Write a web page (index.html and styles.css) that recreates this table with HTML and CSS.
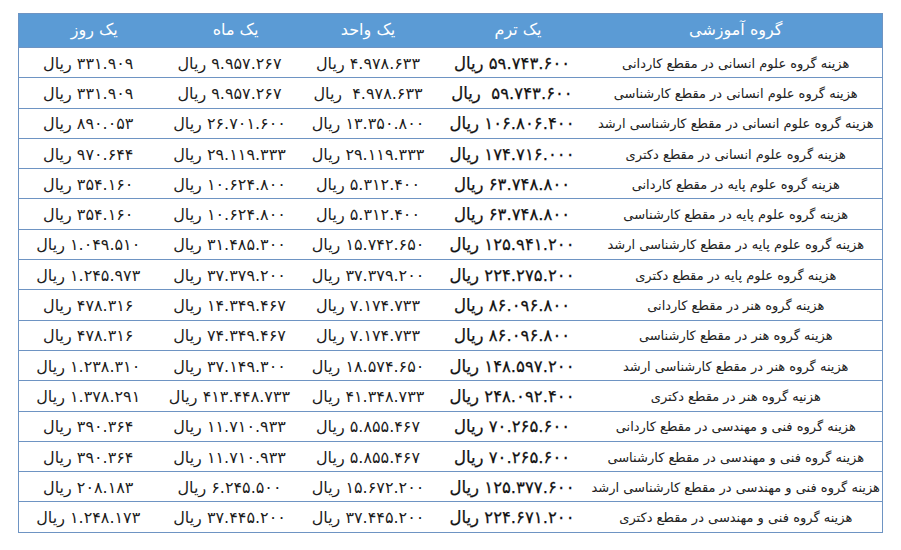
FILE: index.html
```html
<!DOCTYPE html>
<html lang="fa" dir="rtl">
<head>
<meta charset="utf-8">
<link rel="stylesheet" href="styles.css">
</head>
<body>
<div class="page">
<table class="fees">
<colgroup>
<col class="c-group"><col class="c-term"><col class="c-unit"><col class="c-month"><col class="c-day">
</colgroup>
<thead>
<tr><th class="h-group">گروه آموزشی</th><th class="h-term">یک ترم</th><th class="h-unit">یک واحد</th><th class="h-month">یک ماه</th><th class="h-day">یک روز</th></tr>
</thead>
<tbody>
<tr><td class="group">هزینه گروه علوم انسانی در مقطع کاردانی</td><td class="term">۵۹.۷۴۳.۶۰۰ ریال</td><td>۴.۹۷۸.۶۳۳ ریال</td><td>۹.۹۵۷.۲۶۷ ریال</td><td>۳۳۱.۹۰۹ ریال</td></tr>
<tr><td class="group">هزینه گروه علوم انسانی در مقطع کارشناسی</td><td class="term">۵۹.۷۴۳.۶۰۰&nbsp; ریال</td><td>۴.۹۷۸.۶۳۳&nbsp; ریال</td><td>۹.۹۵۷.۲۶۷ ریال</td><td>۳۳۱.۹۰۹ ریال</td></tr>
<tr><td class="group">هزینه گروه علوم انسانی در مقطع کارشناسی ارشد</td><td class="term">۱۰۶.۸۰۶.۴۰۰ ریال</td><td>۱۳.۳۵۰.۸۰۰ ریال</td><td>۲۶.۷۰۱.۶۰۰ ریال</td><td>۸۹۰.۰۵۳ ریال</td></tr>
<tr><td class="group">هزینه گروه علوم انسانی در مقطع دکتری</td><td class="term">۱۷۴.۷۱۶.۰۰۰ ریال</td><td>۲۹.۱۱۹.۳۳۳ ریال</td><td>۲۹.۱۱۹.۳۳۳ ریال</td><td>۹۷۰.۶۴۴ ریال</td></tr>
<tr><td class="group">هزینه گروه علوم پایه در مقطع کاردانی</td><td class="term">۶۳.۷۴۸.۸۰۰ ریال</td><td>۵.۳۱۲.۴۰۰ ریال</td><td>۱۰.۶۲۴.۸۰۰ ریال</td><td>۳۵۴.۱۶۰ ریال</td></tr>
<tr><td class="group">هزینه گروه علوم پایه در مقطع کارشناسی</td><td class="term">۶۳.۷۴۸.۸۰۰ ریال</td><td>۵.۳۱۲.۴۰۰ ریال</td><td>۱۰.۶۲۴.۸۰۰ ریال</td><td>۳۵۴.۱۶۰ ریال</td></tr>
<tr><td class="group">هزینه گروه علوم پایه در مقطع کارشناسی ارشد</td><td class="term">۱۲۵.۹۴۱.۲۰۰ ریال</td><td>۱۵.۷۴۲.۶۵۰ ریال</td><td>۳۱.۴۸۵.۳۰۰ ریال</td><td>۱.۰۴۹.۵۱۰ ریال</td></tr>
<tr><td class="group">هزینه گروه علوم پایه در مقطع دکتری</td><td class="term">۲۲۴.۲۷۵.۲۰۰ ریال</td><td>۳۷.۳۷۹.۲۰۰ ریال</td><td>۳۷.۳۷۹.۲۰۰ ریال</td><td>۱.۲۴۵.۹۷۳ ریال</td></tr>
<tr><td class="group">هزینه گروه هنر در مقطع کاردانی</td><td class="term">۸۶.۰۹۶.۸۰۰ ریال</td><td>۷.۱۷۴.۷۳۳ ریال</td><td>۱۴.۳۴۹.۴۶۷ ریال</td><td>۴۷۸.۳۱۶ ریال</td></tr>
<tr><td class="group">هزینه گروه هنر در مقطع کارشناسی</td><td class="term">۸۶.۰۹۶.۸۰۰ ریال</td><td>۷.۱۷۴.۷۳۳ ریال</td><td>۷۴.۳۴۹.۴۶۷ ریال</td><td>۴۷۸.۳۱۶ ریال</td></tr>
<tr><td class="group">هزینه گروه هنر در مقطع کارشناسی ارشد</td><td class="term">۱۴۸.۵۹۷.۲۰۰ ریال</td><td>۱۸.۵۷۴.۶۵۰ ریال</td><td>۳۷.۱۴۹.۳۰۰ ریال</td><td>۱.۲۳۸.۳۱۰ ریال</td></tr>
<tr><td class="group">هزنیه گروه هنر در مقطع دکتری</td><td class="term">۲۴۸.۰۹۲.۴۰۰ ریال</td><td>۴۱.۳۴۸.۷۳۳ ریال</td><td>۴۱۳.۴۴۸.۷۳۳ ریال</td><td>۱.۳۷۸.۲۹۱ ریال</td></tr>
<tr><td class="group">هزینه گروه فنی و مهندسی در مقطع کاردانی</td><td class="term">۷۰.۲۶۵.۶۰۰ ریال</td><td>۵.۸۵۵.۴۶۷ ریال</td><td>۱۱.۷۱۰.۹۳۳ ریال</td><td>۳۹۰.۳۶۴ ریال</td></tr>
<tr><td class="group">هزینه گروه فنی و مهندسی در مقطع کارشناسی</td><td class="term">۷۰.۲۶۵.۶۰۰ ریال</td><td>۵.۸۵۵.۴۶۷ ریال</td><td>۱۱.۷۱۰.۹۳۳ ریال</td><td>۳۹۰.۳۶۴ ریال</td></tr>
<tr><td class="group">هزینه گروه فنی و مهندسی در مقطع کارشناسی ارشد</td><td class="term">۱۲۵.۳۷۷.۶۰۰ ریال</td><td>۱۵.۶۷۲.۲۰۰ ریال</td><td>۶.۲۴۵.۵۰۰ ریال</td><td>۲۰۸.۱۸۳ ریال</td></tr>
<tr><td class="group">هزینه گروه فنی و مهندسی در مقطع دکتری</td><td class="term">۲۲۴.۶۷۱.۲۰۰ ریال</td><td>۳۷.۴۴۵.۲۰۰ ریال</td><td>۳۷.۴۴۵.۲۰۰ ریال</td><td>۱.۲۴۸.۱۷۳ ریال</td></tr>
</tbody>
</table>
</div>
</body>
</html>
```
FILE: styles.css
```css
html, body {
  margin: 0;
  padding: 0;
  background: #ffffff;
}
.page {
  padding: 13px 18px 0 20px;
  font-family: "DejaVu Sans", "Noto Sans", sans-serif;
  color: #1c1c1c;
}
.fees {
  width: 864px;
  border-collapse: collapse;
  table-layout: fixed;
  border: 1px solid #6e94c3;
}
.c-group { width: 293px; }
.c-term { width: 155px; }
.c-unit { width: 133px; }
.c-month { width: 144px; }
.c-day { width: 139px; }
.fees th {
  background: #5b9bd5;
  color: #ffffff;
  font-weight: normal;
  font-size: 16px;
  line-height: 18px;
  height: 31px;
  padding: 0 0 2px 0;
  text-align: center;
  border: none;
}
.fees th.h-term,
.fees th.h-month,
.fees th.h-day { padding-left: 12px; }
.fees td {
  height: 30.3px;
  padding: 2px 0 0 0;
  line-height: 18px;
  text-align: center;
  font-size: 16px;
  border-top: 1px solid #6e94c3;
  white-space: nowrap;
  vertical-align: middle;
  box-sizing: border-box;
}
.fees td.group {
  font-size: 13px;
  color: #222222;
}
.fees td.term {
  font-size: 16.5px;
  color: #111111;
  -webkit-text-stroke: 0.25px #111111;
}
```
